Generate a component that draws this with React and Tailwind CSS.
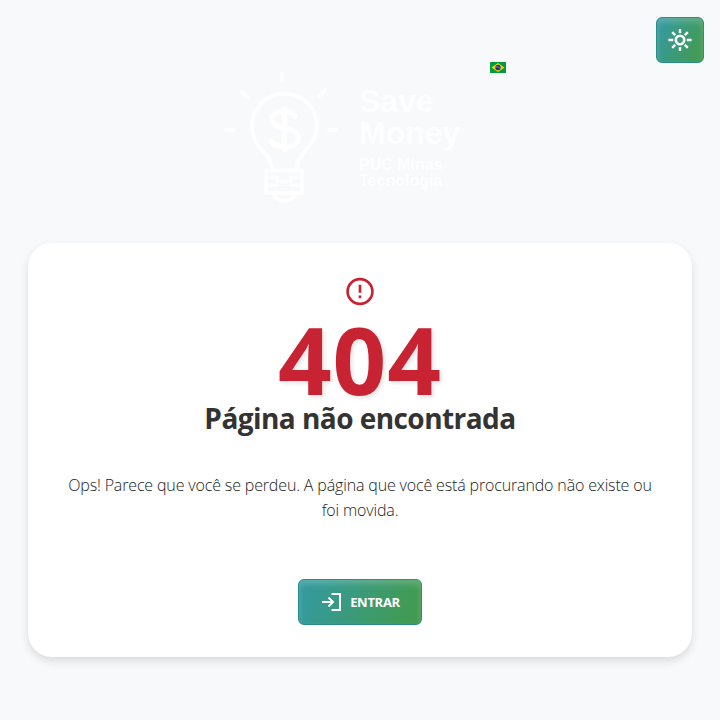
import React from "react";

const buttonLook =
  "flex h-[46px] items-center justify-center rounded-md border border-[#2b8c8a] bg-[linear-gradient(110deg,#349a9d_8%,#429b51_92%)] text-white shadow-[inset_0_4px_6px_rgba(255,255,255,0.2)]";

function SunIcon() {
  return (
    <svg width="24" height="24" viewBox="0 0 24 24" fill="none" stroke="currentColor" strokeWidth="2.4">
      <circle cx="12" cy="12" r="4.2" strokeWidth="2.6" />
      <path d="M12 1v4M12 19v4M.4 12h4.8M18.8 12h4.8M4.2 4.2l3 3M16.8 16.8l3 3M19.8 4.2l-3 3M7.2 16.8l-3 3" />
    </svg>
  );
}

function BulbLogo() {
  return (
    <svg width="116" height="134" viewBox="0 0 116 134" fill="none" stroke="currentColor" strokeWidth="4" strokeLinecap="round" strokeLinejoin="round">
      <path d="M48 97C48 90 44 84 38 78C31 71 28 64 28 54A32.500 32.500 0 0 1 93 54C93 64 88 71 82 78C76 84 73 90 73 97" />
      <path d="M58 2v7M18 20l5 5M101 18l-6 6M2 58h8M105 58h7" />
      <path d="M71 44C68 40 65 39 61 39C53 39 48 43 48 47C48 59 74 53 74 66C74 72 68 75 61 75C55 75 50 73 47 69M60.500 37v41" strokeWidth="5.5" />
      <path d="M42 98.500h36v22.500h-36zM42 105.500h11v8h-11M78 105.500h-11v8h11M53 109.500h14" />
      <path d="M50 122C52 131 69 131 71 122" />
    </svg>
  );
}

function BrazilFlag() {
  return (
    <svg width="16" height="11" viewBox="0 0 16 11">
      <rect width="16" height="11" rx="0.5" fill="#009b3a" />
      <path d="M8 1l6.5 4.5L8 10 1.5 5.5z" fill="#f4d20b" />
      <circle cx="8" cy="5.5" r="2.7" fill="#1d3476" />
      <path d="M5.5 4.8Q8 4.4 10.4 6.4" stroke="#c8d2df" strokeWidth="0.5" fill="none" />
    </svg>
  );
}

export default function App() {
  return (
    <div className="relative h-[720px] w-full overflow-hidden bg-[#f8f9fb] px-7 pt-[60px] font-['Open_Sans','Noto_Sans',sans-serif]">
      <button aria-label="Tema" className={`${buttonLook} absolute right-4 top-[17px] w-12`}>
        <SunIcon />
      </button>
      <header className="flex h-[183px] pl-[196px] text-[#fefefe]">
        <div className="pt-3">
          <BulbLogo />
        </div>
        <div className="ml-[19px] w-[131px] pt-[25px] font-['Liberation_Sans',Arial,sans-serif] font-bold">
          <div className="text-[32px] leading-8">Save<br />Money</div>
          <div className="mt-2 text-base leading-4">PUC Minas<br />Tecnologia</div>
        </div>
        <div className="pt-[2px]">
          <BrazilFlag />
        </div>
      </header>
      <main className="flex h-[414px] flex-col items-center rounded-3xl bg-white pt-8 shadow-[0_4px_8px_rgba(0,0,0,0.12)]">
        <svg width="32" height="33" viewBox="0 0 24 24" fill="none" stroke="#c82333" strokeWidth="2">
          <circle cx="12" cy="12" r="9.3" />
          <path d="M12 7v6M12 15v2" />
        </svg>
        <h1 className="mt-1 h-[88px] text-[94px] font-bold leading-[94px] tracking-[1px] text-[#c82333] [text-shadow:2px_2px_4px_rgba(0,0,0,0.12)]">404</h1>
        <h2 className="whitespace-nowrap text-[28px] font-bold leading-9 tracking-[-0.55px] text-[#333333]">Página não encontrada</h2>
        <p className="mt-[37px] whitespace-nowrap text-center text-base font-light leading-[25px] tracking-[-0.15px] text-[#222222]">
          Ops! Parece que você se perdeu. A página que você está procurando não existe ou<br />foi movida.
        </p>
        <button className={`${buttonLook} mt-[56px] w-[124px] gap-2 pl-[2px]`}>
          <svg width="20" height="20" viewBox="0 0 20 20" fill="none" stroke="currentColor" strokeWidth="2">
            <path d="M9.500 2H18v16H9.500M0 10h11M6.500 5.500l4.500 4.500-4.500 4.500" />
          </svg>
          <span className="text-[13px] font-bold leading-5 tracking-[-0.3px]">ENTRAR</span>
        </button>
      </main>
    </div>
  );
}
